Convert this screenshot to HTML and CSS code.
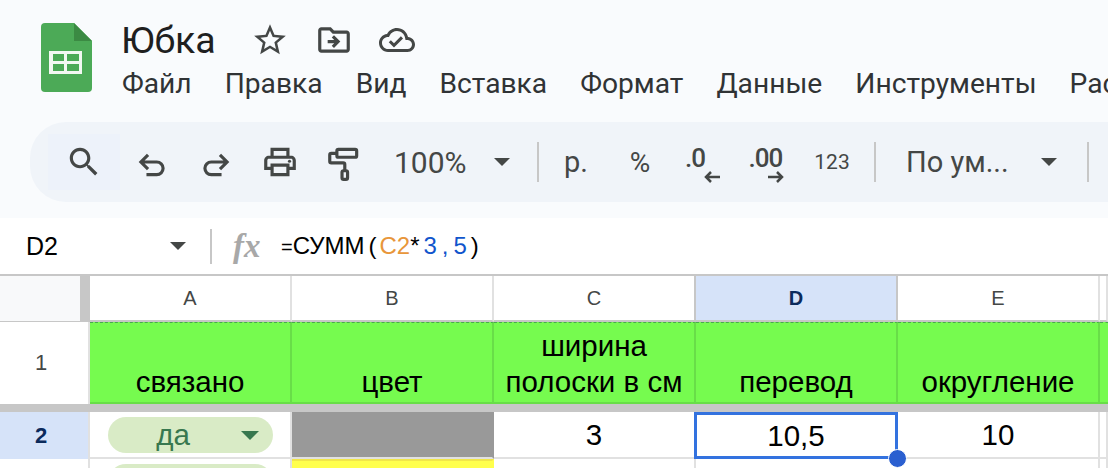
FILE: index.html
```html
<!DOCTYPE html>
<html lang="ru">
<head>
  <meta charset="UTF-8">
  <title>Юбка</title>
  <link rel="stylesheet" href="styles.css">
</head>
<body>
  <header class="doc-header">
    <svg class="logo" viewBox="0 0 51 69" width="51" height="69">
      <path d="M4 0H33L51 18V65a4 4 0 0 1-4 4H4a4 4 0 0 1-4-4V4a4 4 0 0 1 4-4z" fill="#4caa57"/>
      <path d="M33 0L51 18H33z" fill="#3b8a43"/>
      <path d="M8 28H41V51H8zM12 31V38H23V31zM26 31V38H38V31zM12 41V48H23V41zM26 41V48H38V41z" fill="#f2f8f2" fill-rule="evenodd"/>
    </svg>
    <div class="doc-info">
      <div class="title-row">
        <span class="doc-title">Юбка</span>
        <svg class="title-icon star" viewBox="0 0 24 24"><path d="M22 9.24l-7.19-.62L12 2 9.19 8.63 2 9.24l5.46 4.73L5.82 21 12 17.27 18.18 21l-1.63-7.03L22 9.24zM12 15.4l-3.76 2.27 1-4.28-3.32-2.88 4.38-.38L12 6.1l1.71 4.04 4.38.38-3.32 2.88 1 4.28L12 15.4z"/></svg>
        <svg class="title-icon folder" viewBox="0 0 24 24"><path fill-rule="evenodd" d="M20 6h-8l-2-2H4c-1.1 0-2 .9-2 2v12c0 1.1.9 2 2 2h16c1.1 0 2-.9 2-2V8c0-1.1-.9-2-2-2zm0 12H4V6h5.17l2 2H20v10z"/><path d="M12.16 12H8v2h4.16l-1.59 1.59L12 17l4-4-4-4-1.41 1.41z"/></svg>
        <svg class="title-icon cloud" viewBox="0 0 24 24"><path fill-rule="evenodd" d="M19.35 10.04C18.67 6.59 15.64 4 12 4 9.11 4 6.6 5.64 5.35 8.04 2.34 8.36 0 10.91 0 14c0 3.31 2.69 6 6 6h13c2.76 0 5-2.24 5-5 0-2.64-2.05-4.78-4.65-4.96zM19 18H6c-2.21 0-4-1.79-4-4 0-2.05 1.53-3.76 3.56-3.97l1.07-.11.5-.95C8.08 7.14 9.94 6 12 6c2.62 0 4.88 1.86 5.39 4.43l.3 1.5 1.53.11c1.56.1 2.78 1.41 2.78 2.96 0 1.65-1.35 3-3 3z"/><path d="M10 14.18l-2.09-2.09L6.5 13.5 10 17l6.01-6.01-1.41-1.41z"/></svg>
      </div>
      <nav class="menu">
        <span>Файл</span><span>Правка</span><span>Вид</span><span>Вставка</span><span>Формат</span><span>Данные</span><span>Инструменты</span><span>Расширения</span>
      </nav>
    </div>
  </header>

  <div class="toolbar">
    <div class="tool tool-search">
      <svg class="icon" viewBox="0 0 24 24"><path d="M15.5 14h-.79l-.28-.27C15.41 12.59 16 11.11 16 9.5 16 5.91 13.09 3 9.5 3S3 5.91 3 9.5 5.91 16 9.5 16c1.61 0 3.09-.59 4.23-1.57l.27.28v.79l5 4.99L20.49 19l-4.99-5zm-6 0C7.01 14 5 11.99 5 9.5S7.01 5 9.5 5 14 7.01 14 9.5 11.99 14 9.5 14z"/></svg>
    </div>
    <div class="tool">
      <svg class="icon line" viewBox="0 0 24 24"><path d="M9.500 7.500L5 12l4.500 4.500M5 12h10a4 4 0 0 1 0 8H8.500"/></svg>
    </div>
    <div class="tool">
      <svg class="icon line" viewBox="0 0 24 24"><path d="M14.500 7.500L19 12l-4.500 4.500M19 12H9a4 4 0 0 0 0 8h6.500"/></svg>
    </div>
    <div class="tool">
      <svg class="icon" viewBox="0 0 24 24"><path fill-rule="evenodd" d="M19 8h-1V3H6v5H5c-1.66 0-3 1.340-3 3v6h4v4h12v-4h4v-6c0-1.660-1.340-3-3-3zM8 5h8v3H8V5zm8 14H8v-4h8v4zm2-4v-2H6v2H4v-4c0-.550.450-1 1-1h14c.550 0 1 .450 1 1v4h-2z"/><circle cx="18" cy="11.500" r="1"/></svg>
    </div>
    <div class="tool">
      <svg class="icon line" viewBox="0 0 24 24"><rect x="7.500" y="4" width="12.500" height="5" rx="1"/><path d="M7.500 6.500H4a1 1 0 0 0-1 1v4a1 1 0 0 0 1 1h7.500a1 1 0 0 1 1 1V17.500"/><rect x="10.750" y="17.500" width="3.500" height="5.500" rx="1"/></svg>
    </div>
    <div class="tool tool-zoom"><span>100%</span><i class="caret"></i></div>
    <i class="divider"></i>
    <div class="tool tool-currency"><span>р.</span></div>
    <div class="tool tool-percent"><span>%</span></div>
    <div class="tool tool-decimal">
      <span class="decimal-text decimal-less">.0</span>
      <svg class="arrow arrow-left" viewBox="0 0 16 12"><path d="M7 1L2 6l5 5M2 6h14"/></svg>
    </div>
    <div class="tool tool-decimal">
      <span class="decimal-text decimal-more">.00</span>
      <svg class="arrow arrow-right" viewBox="0 0 16 12"><path d="M9 1l5 5-5 5M14 6H0"/></svg>
    </div>
    <div class="tool tool-count"><span>123</span></div>
    <i class="divider"></i>
    <div class="tool tool-font"><span>По ум...</span><i class="caret"></i></div>
    <i class="divider"></i>
  </div>

  <div class="formula-bar">
    <div class="name-box"><span>D2</span><i class="caret"></i></div>
    <i class="divider"></i>
    <span class="fx">fx</span>
    <div class="formula"><span class="eq">=</span>СУММ<span class="paren">(</span><span class="ref">С2</span>*<span class="num">3,5</span><span class="paren-end">)</span></div>
  </div>

  <div class="sheet">
    <div class="row row-head">
      <div class="corner"></div>
      <div class="col-head">A</div>
      <div class="col-head">B</div>
      <div class="col-head">C</div>
      <div class="col-head active">D</div>
      <div class="col-head">E</div>
      <div class="col-head"></div>
    </div>
    <div class="row row-title">
      <div class="row-num">1</div>
      <div class="cell green">связано</div>
      <div class="cell green">цвет</div>
      <div class="cell green">ширина полоски в см</div>
      <div class="cell green">перевод</div>
      <div class="cell green">округление</div>
      <div class="cell green"></div>
    </div>
    <div class="freeze"></div>
    <div class="row row-data">
      <div class="row-num active">2</div>
      <div class="cell"><div class="chip">да<i class="chip-caret"></i></div></div>
      <div class="cell gray"></div>
      <div class="cell">3</div>
      <div class="cell selected">10,5<i class="handle"></i></div>
      <div class="cell">10</div>
      <div class="cell"></div>
    </div>
    <div class="row row-data">
      <div class="row-num"></div>
      <div class="cell"><div class="chip"></div></div>
      <div class="cell yellow"></div>
      <div class="cell"></div>
      <div class="cell"></div>
      <div class="cell"></div>
      <div class="cell"></div>
    </div>
  </div>
</body>
</html>
```
FILE: styles.css
```css
html, body {
  margin: 0;
  height: 468px;
  overflow: hidden;
}
body {
  background-color: #f9fbfd;
  font-family: Roboto, "Liberation Sans", sans-serif;
  color: #444746;
}

/* title area */
.doc-header {
  display: flex;
  height: 122px;
  padding-left: 41px;
  box-sizing: border-box;
}
.logo {
  margin-top: 23px;
  flex: none;
}
.doc-info {
  margin-left: 29px;
  padding-top: 18px;
  white-space: nowrap;
  overflow: hidden;
}
.title-row {
  display: flex;
  align-items: center;
  height: 44px;
}
.doc-title {
  font-size: 37.500px;
  color: #1f1f1f;
  width: 130px;
}
.title-icon {
  fill: #444746;
  flex: none;
}
.star {
  width: 38px;
  height: 38px;
}
.folder {
  width: 38px;
  height: 38px;
  margin-left: 26px;
}
.cloud {
  width: 36px;
  height: 36px;
  margin-left: 26px;
}
.menu {
  display: flex;
  gap: 33px;
  padding-left: 1px;
  font-size: 28.200px;
  line-height: 44px;
  color: #303335;
}

/* toolbar */
.toolbar {
  display: flex;
  align-items: center;
  height: 80px;
  margin-left: 30px;
  padding-left: 18px;
  background-color: #f0f4f9;
  border-radius: 36px 0 0 36px;
  white-space: nowrap;
}
.tool {
  display: flex;
  align-items: center;
  justify-content: center;
  flex: none;
  width: 64px;
  height: 56px;
  font-size: 29px;
}
.tool-search {
  width: 72px;
  background-color: #edf2fa;
}
.icon {
  width: 38px;
  height: 38px;
  fill: #444746;
}
.icon.line {
  fill: none;
  stroke: #444746;
  stroke-width: 2;
}
.tool-zoom {
  width: 161px;
  justify-content: flex-start;
  padding-left: 18px;
  box-sizing: border-box;
  gap: 27px;
  font-size: 30px;
}
.tool-currency {
  margin-left: 5px;
}
.tool-percent {
  font-size: 28px;
}
.tool-count {
  margin-right: 10px;
  font-size: 21px;
}
.tool-font {
  width: 211px;
  justify-content: flex-start;
  padding-left: 30px;
  box-sizing: border-box;
  gap: 32px;
}
.tool-decimal {
  position: relative;
  font-size: 26px;
}
.decimal-text {
  margin-top: -8px;
  letter-spacing: -1px;
  font-weight: 500;
}
.decimal-less {
  margin-left: -18px;
}
.decimal-more {
  margin-left: -5px;
}
.arrow {
  position: absolute;
  top: 37px;
  width: 16px;
  height: 12px;
  fill: none;
  stroke: #444746;
  stroke-width: 2.500;
}
.arrow-left {
  left: 32px;
}
.arrow-right {
  left: 32px;
}
.caret {
  flex: none;
  width: 0;
  height: 0;
  border-left: 8px solid transparent;
  border-right: 8px solid transparent;
  border-top: 8px solid #444746;
}
.divider {
  flex: none;
  width: 2px;
  height: 40px;
  background-color: #c7c7c7;
}

/* formula bar */
.formula-bar {
  display: flex;
  align-items: center;
  height: 56px;
  background-color: #fff;
  border-bottom: 2px solid #c7c7c7;
  font-family: "Liberation Sans", sans-serif;
  color: #000;
  white-space: nowrap;
  margin-top: 16px;
}
.formula-bar .divider {
  height: 35px;
}
.name-box {
  display: flex;
  align-items: center;
  justify-content: space-between;
  width: 210px;
  padding: 0 24px 0 26px;
  box-sizing: border-box;
  font-size: 25px;
}
.fx {
  width: 28px;
  margin-left: 21px;
  font-family: "Liberation Serif", serif;
  font-size: 33px;
  font-style: italic;
  font-weight: bold;
  color: #a8a8a8;
}
.formula {
  margin-left: 20px;
  font-size: 24px;
}
.eq {
  font-size: 20px;
}
.paren {
  margin: 0 3px 0 4px;
}
.paren-end {
  margin-left: -1px;
}
.ref {
  color: #e8963a;
}
.num {
  margin-left: 4px;
  color: #1155cc;
  letter-spacing: 5px;
}

/* grid */
.sheet {
  height: 192px;
  overflow: hidden;
  font-family: "Liberation Sans", sans-serif;
  background-color: #fff;
  color: #000;
}
.row {
  display: grid;
  grid-template-columns: 90px 202px 202px 202px 202px 202px 8px;
}
.row-head {
  height: 46px;
  font-size: 20px;
  color: #444746;
}
.corner {
  background-color: #f8f9fa;
  border-right: 10px solid #c7c7c7;
  box-sizing: border-box;
  border-bottom: 1px solid #c7c7c7;
}
.col-head {
  display: flex;
  align-items: center;
  justify-content: center;
  border-right: 2px solid #e1e1e1;
  border-bottom: 2px solid #c7c7c7;
  box-sizing: border-box;
}
.col-head.active {
  background-color: #d6e3f9;
  color: #0b2a5c;
  font-weight: bold;
  border-left: 2px solid #c7c7c7;
  margin-left: -2px;
  border-right-color: #c7c7c7;
}
.row-title {
  height: 82px;
}
.row-num {
  display: flex;
  align-items: center;
  justify-content: center;
  font-size: 22px;
  color: #444746;
  border-right: 2px solid #e1e1e1;
  box-sizing: border-box;
  padding-right: 6px;
}
.row-num.active {
  background-color: #d6e3f9;
  color: #0b2a5c;
  font-weight: bold;
}
.cell {
  position: relative;
  display: flex;
  align-items: center;
  justify-content: center;
  font-size: 29.500px;
  text-align: center;
  border-right: 2px solid #e1e1e1;
  border-bottom: 2px solid #e1e1e1;
  box-sizing: border-box;
}
.green {
  align-items: flex-end;
  padding: 0 6px 2px;
  line-height: 36px;
  background-color: #76fb4f;
  border-top: 1px dashed #4aa84f;
  border-right-color: #68de48;
  border-bottom-color: #68de48;
}
.freeze {
  height: 8px;
  background-color: #c7c7c7;
}
.row-data {
  height: 47px;
}
.gray {
  background-color: #999;
  border-right-color: #999;
}
.yellow {
  background-color: #ffff4d;
  border-top: 2px solid #f1e64a;
  border-right-color: #ffff4d;
}
.chip {
  display: flex;
  align-items: center;
  justify-content: center;
  position: relative;
  width: 165px;
  height: 36px;
  border-radius: 18px;
  background-color: #d9ebc6;
  color: #38784f;
  padding-right: 34px;
  box-sizing: border-box;
}
.chip-caret {
  position: absolute;
  right: 14px;
  top: 14px;
  width: 0;
  height: 0;
  border-left: 9px solid transparent;
  border-right: 9px solid transparent;
  border-top: 9px solid #38784f;
}
.selected {
  z-index: 1;
  border: 3px solid #3372df;
  margin-left: -2px;
}
.handle {
  position: absolute;
  right: -12px;
  bottom: -12px;
  width: 17px;
  height: 17px;
  border-radius: 50%;
  background-color: #2a5fd0;
  border: 1px solid #fff;
}
```
